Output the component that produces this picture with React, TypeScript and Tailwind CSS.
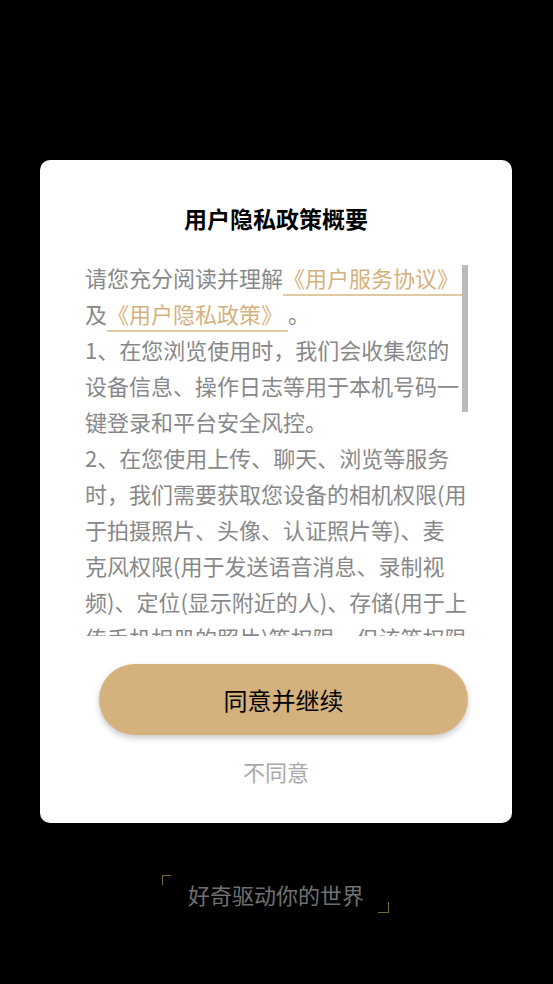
import React from "react";

const font = { fontFamily: '"Noto Sans CJK SC", "Noto Sans", sans-serif' };

const PolicyLink: React.FC<{ children: React.ReactNode }> = ({ children }) => (
  <span className="text-[#d6b17d] underline decoration-[#e3c9a3] decoration-[1.5px] underline-offset-[7px]">
    {children}
  </span>
);

export default function App() {
  return (
    <div className="w-full min-h-[984px] bg-black flex flex-col items-start pl-[40px]" style={font}>
      <div className="mt-[160px] w-[472px] h-[663px] bg-white rounded-[10px] flex flex-col items-center">
        <h1 className="mt-[42px] text-[23px] leading-[32px] font-bold text-black">
          用户隐私政策概要
        </h1>

        <div className="relative mt-[25px] self-start ml-[45px] w-[386px] h-[377px] overflow-hidden">
          <p className="text-[22px] leading-[36px] text-[#888888] whitespace-nowrap">
            请您充分阅读并理解<PolicyLink>《用户服务协议》&nbsp;</PolicyLink>
            <br />
            及<PolicyLink>《用户隐私政策》&nbsp;</PolicyLink>。
            <br />
            1、在您浏览使用时，我们会收集您的
            <br />
            设备信息、操作日志等用于本机号码一
            <br />
            键登录和平台安全风控。
            <br />
            2、在您使用上传、聊天、浏览等服务
            <br />
            时，我们需要获取您设备的相机权限(用
            <br />
            于拍摄照片、头像、认证照片等)、麦
            <br />
            克风权限(用于发送语音消息、录制视
            <br />
            频)、定位(显示附近的人)、存储(用于上
            <br />
            传手机相册的照片)等权限，但该等权限
            <br />
            均不会默认开启，只有经过您的明示授
            <br />
            权才会在实现功能或服务时使用。
          </p>
          <div className="absolute left-[377px] top-[6px] w-[6px] h-[147px] bg-[#bababa]" />
        </div>

        <button
          type="button"
          className="mt-[28px] self-start ml-[59px] w-[369px] h-[71px] rounded-full bg-[#d5b17e] shadow-[0_3px_6px_rgba(0,0,0,0.22)] text-[24px] text-black"
        >
          同意并继续
        </button>

        <button type="button" className="mt-[18px] text-[22px] leading-[36px] text-[#a9a9a9]">
          不同意
        </button>
      </div>

      <div className="mt-[52px] ml-[122px] flex items-start">
        <div className="w-[9px] h-[10px] border-t-[1.5px] border-l-[1.5px] border-[#7a6638]" />
        <div className="ml-[17px] mr-[14px] mt-[3px] text-[22px] leading-[32px] text-[#707070]">
          好奇驱动你的世界
        </div>
        <div className="mt-[27px] w-[11px] h-[11px] border-b-[1.5px] border-r-[1.5px] border-[#7a6638]" />
      </div>
    </div>
  );
}
